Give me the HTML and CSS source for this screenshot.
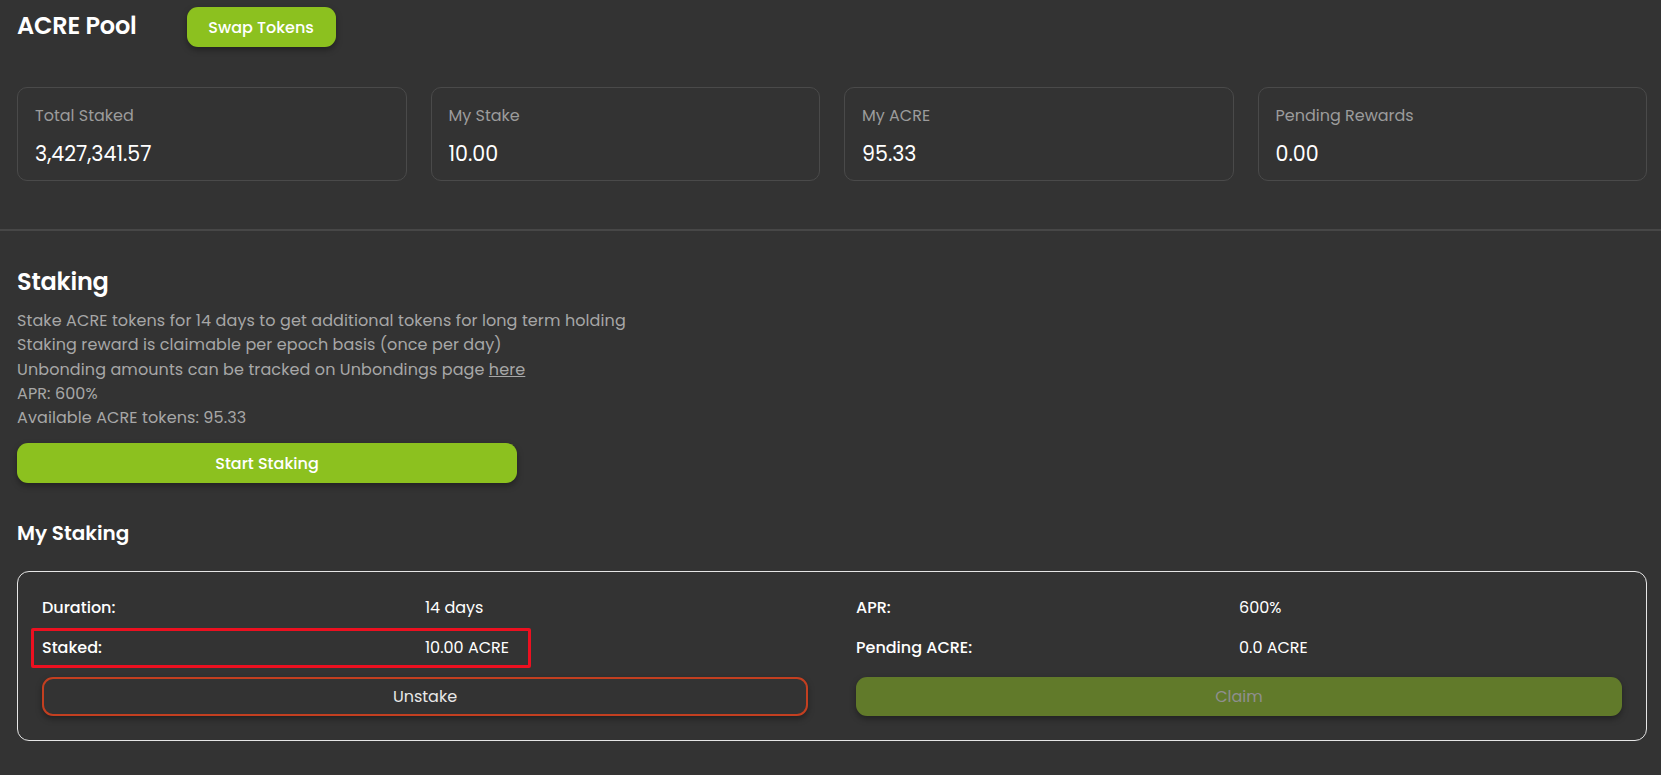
FILE: index.html
```html
<!DOCTYPE html>
<html lang="en">
<head>
<meta charset="utf-8">
<title>ACRE Pool</title>
<link rel="stylesheet" href="styles.css">
</head>
<body>
  <header class="header">
    <h1 class="title">ACRE Pool</h1>
    <button class="btn btn-green btn-swap">Swap Tokens</button>
  </header>

  <section class="stats">
    <div class="card">
      <div class="card-label">Total Staked</div>
      <div class="card-value">3,427,341.57</div>
    </div>
    <div class="card">
      <div class="card-label">My Stake</div>
      <div class="card-value">10.00</div>
    </div>
    <div class="card">
      <div class="card-label">My ACRE</div>
      <div class="card-value">95.33</div>
    </div>
    <div class="card">
      <div class="card-label">Pending Rewards</div>
      <div class="card-value">0.00</div>
    </div>
  </section>

  <hr class="divider">

  <section class="staking">
    <h2 class="section-title">Staking</h2>
    <div class="info">
      <p>Stake ACRE tokens for 14 days to get additional tokens for long term holding</p>
      <p>Staking reward is claimable per epoch basis (once per day)</p>
      <p>Unbonding amounts can be tracked on Unbondings page <a href="#" class="link">here</a></p>
      <p>APR: 600%</p>
      <p>Available ACRE tokens: 95.33</p>
    </div>
    <button class="btn btn-green btn-start">Start Staking</button>

    <h3 class="sub-title">My Staking</h3>

    <div class="my-box">
      <div class="col col-left">
        <div class="row"><span class="k">Duration:</span><span class="v">14 days</span></div>
        <div class="row"><span class="k">Staked:</span><span class="v">10.00 ACRE</span></div>
        <div class="highlight"></div>
        <button class="btn btn-outline">Unstake</button>
      </div>
      <div class="col">
        <div class="row"><span class="k">APR:</span><span class="v">600%</span></div>
        <div class="row"><span class="k">Pending ACRE:</span><span class="v">0.0 ACRE</span></div>
        <button class="btn btn-disabled">Claim</button>
      </div>
    </div>
  </section>
</body>
</html>
```

FILE: styles.css
```css
* { box-sizing: border-box; }

html, body {
  margin: 0;
  padding: 0;
  background: #333333;
  color: #ffffff;
  font-family: "Poppins", Inter, "Open Sans", sans-serif;
}

.header {
  display: flex;
  align-items: flex-start;
  gap: 50px;
  padding: 7px 14px 0 17px;
  height: 54px;
}

.title {
  margin: 1px 0 0 0;
  font-size: 24px;
  line-height: 36px;
  font-weight: 600;
  letter-spacing: -0.2px;
}

.btn {
  font-family: inherit;
  border: none;
  cursor: pointer;
  border-radius: 11px;
  font-size: 15px;
  font-weight: 500;
  color: #ffffff;
}

.btn-green {
  background: #8cc11f;
  box-shadow: 0 3px 6px rgba(0, 0, 0, 0.35);
}

.btn-swap {
  width: 149px;
  height: 40px;
  padding: 0;
  font-size: 16px;
}

.stats {
  display: grid;
  grid-template-columns: repeat(4, 1fr);
  gap: 24px;
  padding: 0 14px 0 17px;
  margin-top: 33px;
}

.card {
  height: 94px;
  border: 1px solid #4a4a4a;
  border-radius: 10px;
  padding: 17px 17px 0 17px;
}

.card-label {
  font-size: 16px;
  line-height: 22px;
  color: #9c9c9c;
}

.card-value {
  margin-top: 13px;
  font-size: 20.6px;
  line-height: 28px;
  color: #ffffff;
}

.divider {
  margin: 48px 0 0 0;
  border: none;
  border-top: 2px solid #474747;
  height: 0;
}

.staking {
  padding: 0 14px 0 17px;
}

.section-title {
  margin: 33px 0 0 0;
  font-size: 24px;
  line-height: 36px;
  font-weight: 600;
  letter-spacing: -0.2px;
}

.info {
  margin-top: 9px;
  color: #a7a7a7;
  font-size: 16px;
  line-height: 24.3px;
  letter-spacing: 0.1px;
}

.info p {
  margin: 0;
}

.link {
  color: #a7a7a7;
  text-decoration: underline;
}

.btn-start {
  display: block;
  margin-top: 13px;
  width: 500px;
  height: 40px;
  font-size: 16px;
}

.sub-title {
  margin: 35px 0 0 0;
  font-size: 20px;
  line-height: 30px;
  font-weight: 600;
}

.my-box {
  margin-top: 23px;
  border: 1px solid #e6e6e6;
  border-radius: 12px;
  padding: 24px 24px 24px 24px;
  display: grid;
  grid-template-columns: 1fr 1fr;
  gap: 48px;
}

.col {
  position: relative;
  display: flex;
  flex-direction: column;
}

.row {
  display: grid;
  grid-template-columns: 1fr 1fr;
  font-size: 16px;
  line-height: 24px;
  color: #ffffff;
}

.row + .row {
  margin-top: 16px;
}

.k {
  font-weight: 500;
}

.btn-outline,
.btn-disabled {
  margin-top: 17px;
  height: 39px;
  font-size: 16px;
  font-weight: 400;
  box-shadow: 0 3px 6px rgba(0, 0, 0, 0.35);
}

.btn-outline {
  background: #333333;
  border: 2px solid #c33f20;
  color: #e8e8e8;
}

.btn-disabled {
  background: #617a2a;
  color: #8f8f8f;
  cursor: default;
}

.highlight {
  position: absolute;
  left: -11px;
  top: 32px;
  width: 500px;
  height: 40px;
  border: 3px solid #ec1020;
  border-radius: 2px;
  pointer-events: none;
}
```
